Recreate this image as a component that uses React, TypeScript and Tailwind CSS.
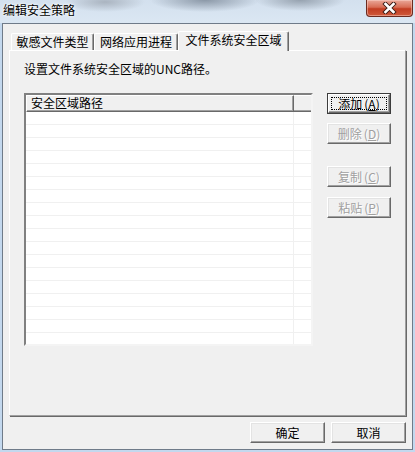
import type { ReactNode } from "react";

const font = "font-['Noto_Sans_CJK_SC','Noto_Sans_CJK_JP',sans-serif]";

const Label = ({ text, mnemonic }: { text: string; mnemonic?: string }) => (
    <span className="whitespace-nowrap">
        {text}
        {mnemonic && (
            <span className="ml-[2px]">
                (<span className="underline underline-offset-1">{mnemonic}</span>)
            </span>
        )}
    </span>
);

const Button = ({
    children,
    disabled,
    isDefault,
    className,
}: {
    children: ReactNode;
    disabled?: boolean;
    isDefault?: boolean;
    className?: string;
}) => {
    if (isDefault) {
        return (
            <div className={`relative flex border border-[#3c3c3c] bg-[#f0f0f0] ${className}`}>
                <div className="flex flex-1 items-center justify-center border border-t-white border-l-white border-b-[#696969] border-r-[#696969] shadow-[inset_-1px_-1px_0_#a0a0a0] text-[12px] leading-[14px] text-black">
                    {children}
                </div>
                <span className="pointer-events-none absolute inset-[3px] border border-dotted border-black" />
            </div>
        );
    }
    return (
        <div
            className={`flex items-center justify-center border border-t-white border-l-white border-b-[#696969] border-r-[#696969] bg-[#f0f0f0] shadow-[inset_-1px_-1px_0_#a0a0a0,inset_1px_1px_0_#e3e3e3] text-[12px] leading-[14px] ${
                disabled ? "text-[#a0a0a0] [text-shadow:1px_1px_0_#fff]" : "text-black"
            } ${className}`}
        >
            {children}
        </div>
    );
};

const Tab = ({ label, selected, className }: { label: string; selected?: boolean; className?: string }) => (
    <div
        className={`flex justify-center rounded-t-[2px] border-t border-l border-r border-t-white border-l-white border-r-[#696969] bg-[#f0f0f0] shadow-[inset_-1px_0_0_#a0a0a0] text-[12px] leading-[14px] text-black ${
            selected ? "relative z-10 -mb-px h-[20px] pt-[1px]" : "h-[17px] pt-[1px]"
        } ${className}`}
    >
        {label}
    </div>
);

const rows = Array.from({ length: 18 }, (_, i) => i);

export default function App() {
    return (
        <div className={`flex h-[452px] w-[415px] flex-col overflow-hidden bg-[#c3d8ee] ${font}`}>
            {/* title bar */}
            <div className="flex h-[23px] items-start justify-between bg-[radial-gradient(ellipse_40px_10px_at_105px_2px,#aab4c0,transparent),radial-gradient(ellipse_55px_12px_at_205px_0px,#8b98a7,transparent),radial-gradient(ellipse_45px_11px_at_300px_0px,#96a2af,transparent),linear-gradient(to_bottom,#d3e0ee,#dbe7f3)]">
                <span className="pl-[3px] pt-[3px] text-[12px] leading-[14px] text-black [text-shadow:0_0_4px_#fff,0_0_2px_#fff]">
                    编辑安全策略
                </span>
                <div className="mr-[2px] flex h-[17px] w-[47px] items-center justify-center rounded-b-[4px] border border-t-0 border-[#6b2b20] bg-[linear-gradient(to_bottom,#eaa899_0%,#d86d55_45%,#c23d22_55%,#cf5a3c_100%)] shadow-[inset_0_0_0_1px_rgba(255,220,210,0.45)]">
                    <svg width="15" height="12" viewBox="0 0 15 12">
                        <path d="M3.5 2 L11.5 10 M11.5 2 L3.5 10" stroke="#3a1a14" strokeWidth="4.4" strokeLinecap="square" />
                        <path d="M3.5 2 L11.5 10 M11.5 2 L3.5 10" stroke="#ffffff" strokeWidth="2.6" strokeLinecap="square" />
                    </svg>
                </div>
            </div>

            {/* window body */}
            <div className="mx-[2px] mb-[2px] flex flex-1 flex-col border border-[#6f7b89] bg-[#f0f0f0] pl-[6px] pr-[6px] pt-[7px]">
                {/* tabs */}
                <div className="flex h-[19px] items-end pl-[2px]">
                    <Tab label="敏感文件类型" className="w-[83px]" />
                    <Tab label="网络应用进程" className="w-[84px]" />
                    <Tab label="文件系统安全区域" selected className="w-[111px]" />
                </div>

                {/* tab panel */}
                <div className="flex h-[366px] w-[397px] flex-col border border-t-white border-l-white border-b-[#a0a0a0] border-r-[#a0a0a0] shadow-[1px_1px_0_#696969] pl-[14px] pt-[11px]">
                    <p className="text-[12px] leading-[14px] text-black">设置文件系统安全区域的UNC路径。</p>

                    <div className="mt-[17px] flex">
                        {/* list view */}
                        <div className="flex h-[253px] w-[289px] flex-col overflow-hidden border-2 border-t-[#808080] border-l-[#808080] border-b-[#f4f4f4] border-r-[#f4f4f4] bg-white">
                            <div className="flex h-[17px] shrink-0 bg-[#f0f0f0]">
                                <div className="w-[268px] border border-t-white border-l-white border-b-[#696969] border-r-[#696969] pl-[4px] text-[12px] leading-[14px] text-black shadow-[inset_-1px_-1px_0_#a0a0a0]">
                                    安全区域路径
                                </div>
                                <div className="flex-1 border-t border-b border-t-white border-b-[#696969] shadow-[inset_0_-1px_0_#a0a0a0]" />
                            </div>
                            {rows.map((r) => (
                                <div key={r} className="flex h-[13px] shrink-0">
                                    <div className="w-[268px] border-r border-b border-[#f0f0f0]" />
                                    <div className="flex-1 border-b border-[#f0f0f0]" />
                                </div>
                            ))}
                        </div>

                        {/* side buttons */}
                        <div className="ml-[14px] flex w-[64px] flex-col">
                            <Button isDefault className="h-[21px]">
                                <Label text="添加" mnemonic="A" />
                            </Button>
                            <Button disabled className="mt-[9px] h-[21px]">
                                <Label text="删除" mnemonic="D" />
                            </Button>
                            <Button disabled className="mt-[22px] h-[21px]">
                                <Label text="复制" mnemonic="C" />
                            </Button>
                            <Button disabled className="mt-[10px] h-[21px]">
                                <Label text="粘贴" mnemonic="P" />
                            </Button>
                        </div>
                    </div>
                </div>

                {/* dialog buttons */}
                <div className="mt-[6px] flex w-[397px] justify-end gap-[6px]">
                    <Button className="h-[21px] w-[75px]">确定</Button>
                    <Button className="h-[21px] w-[75px]">取消</Button>
                </div>
            </div>
        </div>
    );
}
